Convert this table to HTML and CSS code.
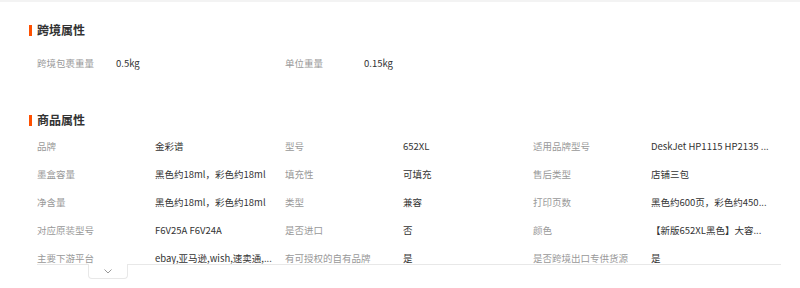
FILE: index.html
```html
<!DOCTYPE html>
<html lang="zh-CN">
<head>
<meta charset="utf-8">
<link rel="stylesheet" href="styles.css">
</head>
<body>
<div class="topline"></div>
<div class="page">
  <section class="sec sec-cross">
    <h2 class="sec-title">跨境属性</h2>
    <div class="grid grid-cross">
      <div class="item"><span class="lab">跨境包裹重量</span><span class="val">0.5kg</span></div>
      <div class="item"><span class="lab">单位重量</span><span class="val">0.15kg</span></div>
    </div>
  </section>
  <section class="sec sec-goods">
    <h2 class="sec-title">商品属性</h2>
    <div class="clip">
      <div class="grid grid-goods">
        <div class="item"><span class="lab">品牌</span><span class="val">金彩谱</span></div>
        <div class="item"><span class="lab">型号</span><span class="val">652XL</span></div>
        <div class="item"><span class="lab">适用品牌型号</span><span class="val">DeskJet HP1115 HP2135 ...</span></div>
        <div class="item"><span class="lab">墨盒容量</span><span class="val">黑色约18ml，彩色约18ml</span></div>
        <div class="item"><span class="lab">填充性</span><span class="val">可填充</span></div>
        <div class="item"><span class="lab">售后类型</span><span class="val">店铺三包</span></div>
        <div class="item"><span class="lab">净含量</span><span class="val">黑色约18ml，彩色约18ml</span></div>
        <div class="item"><span class="lab">类型</span><span class="val">兼容</span></div>
        <div class="item"><span class="lab">打印页数</span><span class="val">黑色约600页，彩色约450...</span></div>
        <div class="item"><span class="lab">对应原装型号</span><span class="val">F6V25A F6V24A</span></div>
        <div class="item"><span class="lab">是否进口</span><span class="val">否</span></div>
        <div class="item"><span class="lab">颜色</span><span class="val">【新版652XL黑色】大容...</span></div>
        <div class="item"><span class="lab">主要下游平台</span><span class="val">ebay,亚马逊,wish,速卖通,...</span></div>
        <div class="item"><span class="lab">有可授权的自有品牌</span><span class="val">是</span></div>
        <div class="item"><span class="lab">是否跨境出口专供货源</span><span class="val">是</span></div>
      </div>
    </div>
    <button class="toggle" type="button" aria-label="展开">
      <svg width="8" height="5" viewBox="0 0 8 5"><path d="M0.5 0.5 L4 4 L7.5 0.5" fill="none" stroke="#999" stroke-width="1"/></svg>
    </button>
  </section>
</div>
</body>
</html>
```
FILE: styles.css
```css
html, body {
  margin: 0;
  padding: 0;
  background: #fff;
}
body {
  font-family: "Noto Sans CJK SC", "Microsoft YaHei", sans-serif;
  font-size: 9.5px;
  color: #333;
}
.topline {
  height: 2px;
  background: #f3f3f3;
}
.page {
  padding-left: 37px;
  width: 744px;
}
.sec-title {
  position: relative;
  margin: 0;
  font-size: 12px;
  font-weight: bold;
  line-height: 20px;
  height: 20px;
  color: #333;
}
.sec-title::before {
  content: "";
  position: absolute;
  left: -8px;
  top: 5px;
  width: 3px;
  height: 11px;
  background: #ff5000;
}
.sec-cross .sec-title {
  margin-top: 18px;
}
.sec-goods .sec-title {
  margin-top: 33px;
}
.grid {
  display: grid;
  grid-template-columns: repeat(3, 248px);
  grid-auto-rows: 28px;
}
.grid-cross {
  margin-top: 9px;
}
.grid-goods {
  margin-top: 2px;
}
.item {
  display: flex;
  align-items: center;
  white-space: nowrap;
}
.lab {
  color: #999;
  flex: none;
}
.grid-cross .lab { width: 79px; }
.grid-goods .lab { width: 118px; }
.val {
  color: #333;
}
.clip {
  height: 134px;
  overflow: hidden;
  border-bottom: 1px solid #e8e8e8;
}
.toggle {
  position: relative;
  z-index: 1;
  display: flex;
  align-items: center;
  justify-content: center;
  margin: -1px 0 0 51px;
  width: 40px;
  height: 15px;
  padding: 0;
  background: #fff;
  border: 1px solid #e8e8e8;
  border-top: none;
  border-radius: 0 0 4px 4px;
  cursor: pointer;
}
```
